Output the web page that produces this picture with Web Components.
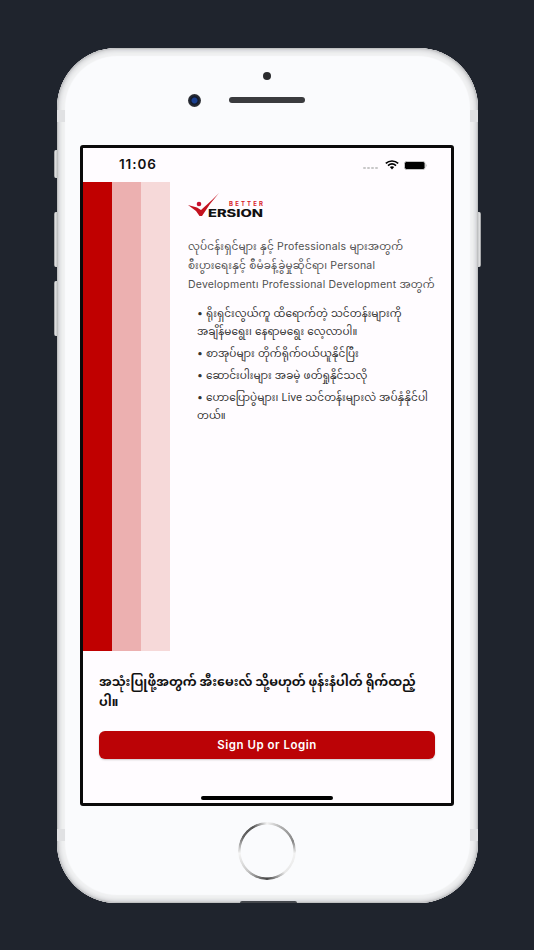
<!DOCTYPE html>
<html lang="my"><head><meta charset="utf-8"><style>
html,body{margin:0;padding:0;background:#1f242d}
body{width:534px;height:950px;overflow:hidden;font-family:Inter,"Noto Sans",sans-serif}
</style></head><body>
<phone-frame>
<status-bar slot="status"></status-bar>
<onboard-screen></onboard-screen>
</phone-frame>
<script>
function def(name,css,html){customElements.define(name,class extends HTMLElement{constructor(){super();this.attachShadow({mode:'open'}).innerHTML='<style>'+css+'</style>'+html;}});}
def('phone-frame',`
:host{display:block;padding:48px 56px 47px 57px}
.body{position:relative;width:421px;height:855px;box-sizing:border-box;border-radius:60px;background:#fafbfd;
 box-shadow:inset 0 0 2px 1px #b5b6b8,inset 0 0 3px 4px #dedfe1,inset 0 0 1px 8px #f0f1f2;display:flex;flex-direction:column;align-items:flex-start;padding:97px 0 0 23px}
.btn{position:absolute;width:3px;background:linear-gradient(90deg,#8d8f92,#eceded 60%,#b9babc);border-radius:2px 0 0 2px}
.notch{position:absolute;width:8px;height:12px;background:#e0e1e3}
.bottom{position:absolute;left:183px;bottom:0;width:57px;height:2px;background:#45484d;border-radius:2px 2px 0 0}
.dot{position:absolute;left:206px;top:24px;width:8px;height:8px;border-radius:50%;background:#2a2b2e}
.cam{position:absolute;left:131px;top:46px;width:13px;height:13px;border-radius:50%;background:radial-gradient(circle,#1a3f8f 0 2.5px,#10182a 3.5px,#34363a 6.5px)}
.spk{position:absolute;left:172px;top:49px;width:76px;height:6px;border-radius:3px;background:#3a3b3e}
.screen{width:374px;height:661px;box-sizing:border-box;border:3px solid #0a0a0a;border-radius:3px;background:#fffcff;position:relative;display:flex;flex-direction:column;overflow:hidden;flex:none}
.home{margin:16px 0 0 158px;width:58px;height:58px;border-radius:50%;flex:none;background:conic-gradient(#f4f4f4 0deg,#b0b0b0 30deg,#858585 70deg,#f2f2f2 95deg,#e8e8e8 140deg,#444 180deg,#c9c9c9 225deg,#f5f5f5 265deg,#666 300deg,#555 330deg,#f4f4f4 360deg);
 -webkit-mask:radial-gradient(circle,transparent 26px,#000 26.8px);mask:radial-gradient(circle,transparent 26px,#000 26.8px)}
.ind{position:absolute;left:118px;bottom:3px;width:132px;height:4px;border-radius:2px;background:#000}
`,`<div class="body">
<div class="btn" style="left:-3px;top:102px;height:28px"></div>
<div class="btn" style="left:-3px;top:164px;height:55px"></div>
<div class="btn" style="left:-3px;top:233px;height:55px"></div>
<div class="btn" style="right:-3px;top:164px;height:55px;transform:scaleX(-1)"></div>
<div class="notch" style="left:0;top:62px"></div><div class="notch" style="right:0;top:62px"></div>
<div class="notch" style="left:0;bottom:62px"></div><div class="notch" style="right:0;bottom:62px"></div>
<div class="bottom"></div>
<div class="dot"></div><div class="cam"></div><div class="spk"></div>
<div class="screen"><slot name="status"></slot><slot></slot><div class="ind"></div></div>
<div class="home"></div>
</div>`);
def('status-bar',`
:host{display:flex;align-items:center;height:34px;box-sizing:border-box;padding:0 24px 0 36px;color:#111}
.t{font:600 13.5px/1 Inter,sans-serif;letter-spacing:.9px;flex:1}
.r{display:flex;align-items:center;gap:6px}
.d{display:flex;gap:1.5px;margin:6px 1px 0 0}.d i{width:2.6px;height:2.6px;border-radius:50%;background:#c8c8c8}
.w{margin-right:-1px}
svg{display:block}
`,`<span class="t">11:06</span><div class="r"><div class="d"><i></i><i></i><i></i><i></i></div>
<svg class="w" width="14" height="10" viewBox="0 0 14 10" fill="none" stroke="#000" stroke-width="1.7"><path d="M.8 3.4C4.400.2 9.600.2 13.200 3.400M3 5.600c2.400-2 5.600-2 8 0"/><path d="M4.800 7 7 9.600 9.200 7C7.900 6 6.100 6 4.800 7z" fill="#000" stroke="none"/></svg>
<svg width="23" height="9" viewBox="0 0 23 9"><rect x=".5" y=".5" width="20.500" height="8" rx="2" fill="#000" stroke="#c4c4c4"/><path d="M21.600 3v3c.8-.2 1.200-.8 1.200-1.500S22.400 3.200 21.600 3z" fill="#c4c4c4"/></svg></div>`);
def('brand-logo',`
:host{display:block;width:76px;height:25px}
svg{display:block;overflow:visible}
text{font-family:Inter,sans-serif}
`,`<svg width="76" height="25" viewBox="0 0 76 25">
<circle cx="11" cy="11" r="2.300" fill="#c8102e"/>
<path d="M0 12 9 14.500 13 17 24 7 31 0 22 11 14 23 11.500 23 8 18Z" fill="#c3121f"/>
<text x="41" y="12.800" font-size="6" font-weight="700" textLength="34" fill="#d8232a">BETTER</text>
<text x="20" y="23.800" font-size="10" font-weight="800" textLength="55" lengthAdjust="spacingAndGlyphs" fill="#111">ERSION</text>
</svg>`);
def('stripe-band',`
:host{display:flex;flex:none;width:87px;height:469px}
i{flex:1}.a{background:#c00000}.b{background:#ecb0b0}.c{background:#f6d9d9}
`,`<i class="a"></i><i class="b"></i><i class="c"></i>`);
const mm='Inter,"Noto Sans Myanmar","Padauk","Myanmar Text","Noto Sans",sans-serif';
def('onboard-screen',`
:host{display:flex;flex-direction:column;flex:1;font-family:${mm}}
.main{display:flex;height:469px}
.content{flex:1;padding:11px 0 0 18px;min-width:0;white-space:nowrap}
p{margin:0}
.intro{margin-top:19px;font-size:10.500px;line-height:19px;color:#505050;letter-spacing:.2px}
ul{list-style:none;margin:11px 0 0;padding:0 0 0 9px;display:flex;flex-direction:column;gap:4px;font-size:10.500px;line-height:18px;color:#333;letter-spacing:.1px}
.foot{padding:21px 16px 0 16px;display:flex;flex-direction:column}
.cta{font-size:12.500px;font-weight:700;line-height:20px;color:#111}
button{margin-top:19px;height:28px;padding:0 0 1px;border:0;border-radius:6px;background:#bb0306;color:#fff;font:600 11.500px Inter,sans-serif;letter-spacing:.5px;box-shadow:0 1px 2px rgba(0,0,0,.2)}
`,`<div class="main"><stripe-band></stripe-band><div class="content"><brand-logo></brand-logo>
<p class="intro">လုပ်ငန်းရှင်များ နှင့် Professionals များအတွက်<br>စီးပွားရေးနှင့် စီမံခန့်ခွဲမှုဆိုင်ရာ၊ Personal<br>Development၊ Professional Development အတွက်</p>
<ul><li>• ရိုးရှင်းလွယ်ကူ ထိရောက်တဲ့ သင်တန်းများကို<br>အချိန်မရွေး၊ နေရာမရွေး လေ့လာပါ။</li><li>• စာအုပ်များ တိုက်ရိုက်ဝယ်ယူနိုင်ပြီး</li><li>• ဆောင်းပါးများ အခမဲ့ ဖတ်ရှုနိုင်သလို</li><li>• ဟောပြောပွဲများ၊ Live သင်တန်းများလဲ အပ်နှံနိုင်ပါ<br>တယ်။</li></ul>
</div></div>
<div class="foot"><p class="cta">အသုံးပြုဖို့အတွက် အီးမေးလ် သို့မဟုတ် ဖုန်းနံပါတ် ရိုက်ထည့်<br>ပါ။</p><button>Sign Up or Login</button></div>`);
</script>
</body></html>
